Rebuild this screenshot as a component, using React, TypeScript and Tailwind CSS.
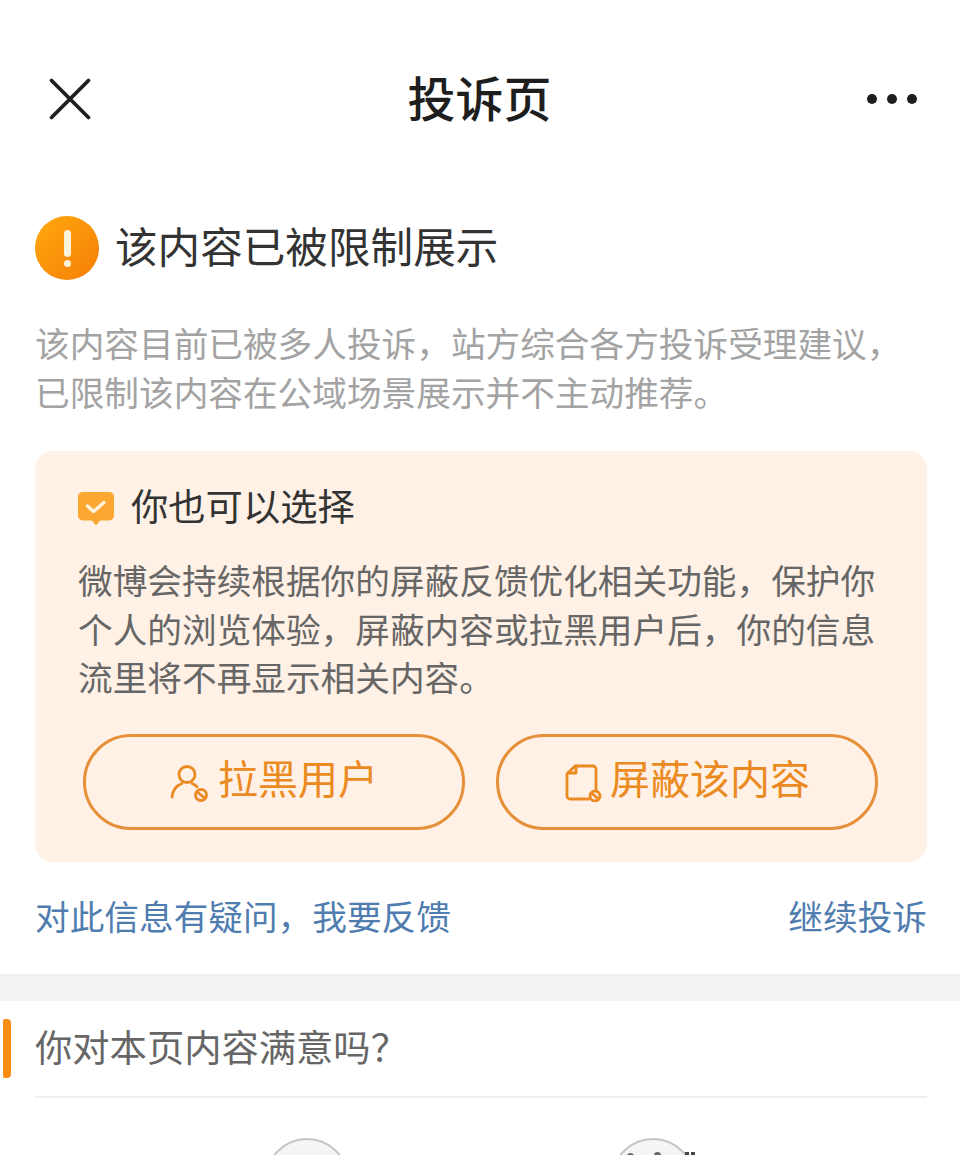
const font = { fontFamily: '"Noto Sans CJK SC", sans-serif' };

function UserBlockIcon() {
  return (
    <svg width="40" height="40" viewBox="0 0 40 40" fill="none" stroke="#ec8a22" strokeWidth="2.8" strokeLinecap="round" className="shrink-0">
      <circle cx="17" cy="12.5" r="8" />
      <path d="M2 35c.7-7 4.600-11.500 10-13.500M22 21.500c2 .8 3.600 1.800 5 3.200" />
      <circle cx="31" cy="33" r="5.500" />
      <path d="M28 30.500l6 5" />
    </svg>
  );
}

function DocBlockIcon() {
  return (
    <svg width="38" height="40" viewBox="0 0 38 40" fill="none" stroke="#ec8a22" strokeWidth="2.8" strokeLinecap="round" strokeLinejoin="round" className="shrink-0">
      <path d="M25 37H6a3 3 0 0 1-3-3V12l8-8h18a3 3 0 0 1 3 3v21" />
      <path d="M4 11h8V4" />
      <circle cx="31" cy="34" r="5" />
      <path d="M28 31.500l6 5" />
    </svg>
  );
}

export default function App() {
  return (
    <div className="w-[960px] h-[1155px] overflow-hidden bg-white" style={font}>
      <header className="h-[197px] pt-[77px] pl-[48px] pr-[43px] flex items-start justify-between">
        <svg width="44" height="44" viewBox="0 0 44 44" fill="none" stroke="#1f1f1f" strokeWidth="3.800" strokeLinecap="round">
          <path d="M3.500 3.500l37 37M40.500 3.500l-37 37" />
        </svg>
        <h1 className="-mt-[3px] text-[48px] leading-[44px] font-medium text-[#1e1e1e]">投诉页</h1>
        <div className="flex gap-[10px] pt-[17px]">
          <span className="w-[10px] h-[10px] rounded-full bg-[#1e1e1e]" />
          <span className="w-[10px] h-[10px] rounded-full bg-[#1e1e1e]" />
          <span className="w-[10px] h-[10px] rounded-full bg-[#1e1e1e]" />
        </div>
      </header>

      <div className="pl-[35px] pr-[33px]">
        <div className="flex items-center gap-[16px] h-[64px] mt-[19px]">
          <div className="w-[64px] h-[64px] rounded-full bg-gradient-to-br from-[#ffa90f] to-[#f57d06] flex flex-col items-center justify-center shrink-0">
            <span className="w-[7px] h-[27px] rounded-full bg-[#fff3d9]" />
            <span className="w-[7px] h-[7px] mt-[3px] rounded-full bg-[#fff3d9]" />
          </div>
          <h2 className="text-[42.6px] leading-[58px] pb-[6px] text-[#333333]">该内容已被限制展示</h2>
        </div>

        <p className="mt-[38px] text-[34.67px] leading-[49px] text-[#a3a3a3] whitespace-nowrap">
          该内容目前已被多人投诉，站方综合各方投诉受理建议，
          <br />
          已限制该内容在公域场景展示并不主动推荐。
        </p>

        <section className="mt-[35px] h-[411px] rounded-[18px] bg-[#fff1e5] pt-[31px] pl-[43px] pr-[43px]">
          <div className="flex items-center gap-[17px] h-[46px]">
            <svg width="36" height="36" viewBox="0 0 36 36" className="shrink-0 mt-[7px]">
              <path d="M5 1h26a5 5 0 0 1 5 4.500v19a5 5 0 0 1-5 5H22l-4 5-4-5H5a5 5 0 0 1-5-5v-19a5 5 0 0 1 5-4.500z" fill="#fda733" />
              <path d="M9.500 15l6 5.500 10.500-9" fill="none" stroke="#fff2dd" strokeWidth="3.400" strokeLinecap="round" strokeLinejoin="round" />
            </svg>
            <h3 className="text-[37.3px] leading-[46px] text-[#333333]">你也可以选择</h3>
          </div>
          <p className="mt-[27px] text-[34.67px] leading-[48.5px] text-[#666666] whitespace-nowrap">
            微博会持续根据你的屏蔽反馈优化相关功能，保护你
            <br />
            个人的浏览体验，屏蔽内容或拉黑用户后，你的信息
            <br />
            流里将不再显示相关内容。
          </p>
          <div className="mt-[33px] flex justify-between pl-[5px] pr-[6px]">
            <button className="w-[382px] h-[96px] rounded-full border-[3px] border-[#e6903a] flex items-center justify-center gap-[8px] text-[40px] text-[#ec8a22]">
              <UserBlockIcon />
              <span className="pb-[10px]">拉黑用户</span>
            </button>
            <button className="w-[382px] h-[96px] rounded-full border-[3px] border-[#e6903a] flex items-center justify-center gap-[8px] text-[40px] text-[#ec8a22]">
              <DocBlockIcon />
              <span className="pb-[10px]">屏蔽该内容</span>
            </button>
          </div>
        </section>

        <div className="mt-[28px] h-[50px] flex justify-between text-[34.67px] leading-[50px] text-[#507daf]">
          <span>对此信息有疑问，我要反馈</span>
          <span>继续投诉</span>
        </div>
      </div>

      <div className="mt-[34px] h-[27px] bg-[#f2f2f2]" />

      <div className="relative">
        <span className="absolute left-[3px] top-[18px] w-[8px] h-[59px] rounded-r-[4px] rounded-l-[2px] bg-[#fb8c12]" />
        <div className="ml-[35px] mr-[33px] h-[97px] border-b-2 border-[#eeeeee] flex items-center">
          <h3 className="text-[37.3px] leading-[46px] pb-[6px] text-[#666666]">你对本页内容满意吗？</h3>
        </div>
      </div>

      <div className="mt-[40px] flex pl-[265px] gap-[262px]">
        <div className="w-[84px] h-[84px] rounded-full border-2 border-[#c4c4c4] bg-gradient-to-b from-[#f6f6f6] to-[#e8e8e8]" />
        <div className="relative w-[84px] h-[84px] rounded-full border-2 border-[#c4c4c4] bg-gradient-to-b from-[#f6f6f6] to-[#e8e8e8]">
          <span className="absolute left-[14px] top-[13px] w-[7px] h-[7px] rounded-full bg-[#666666]" />
          <span className="absolute left-[41px] top-[12px] w-[7px] h-[7px] rounded-full bg-[#666666]" />
          <span className="absolute left-[72px] top-[12px] w-[4px] h-[8px] bg-[#444444]" />
          <span className="absolute left-[78px] top-[12px] w-[4px] h-[8px] bg-[#444444]" />
        </div>
      </div>
    </div>
  );
}
